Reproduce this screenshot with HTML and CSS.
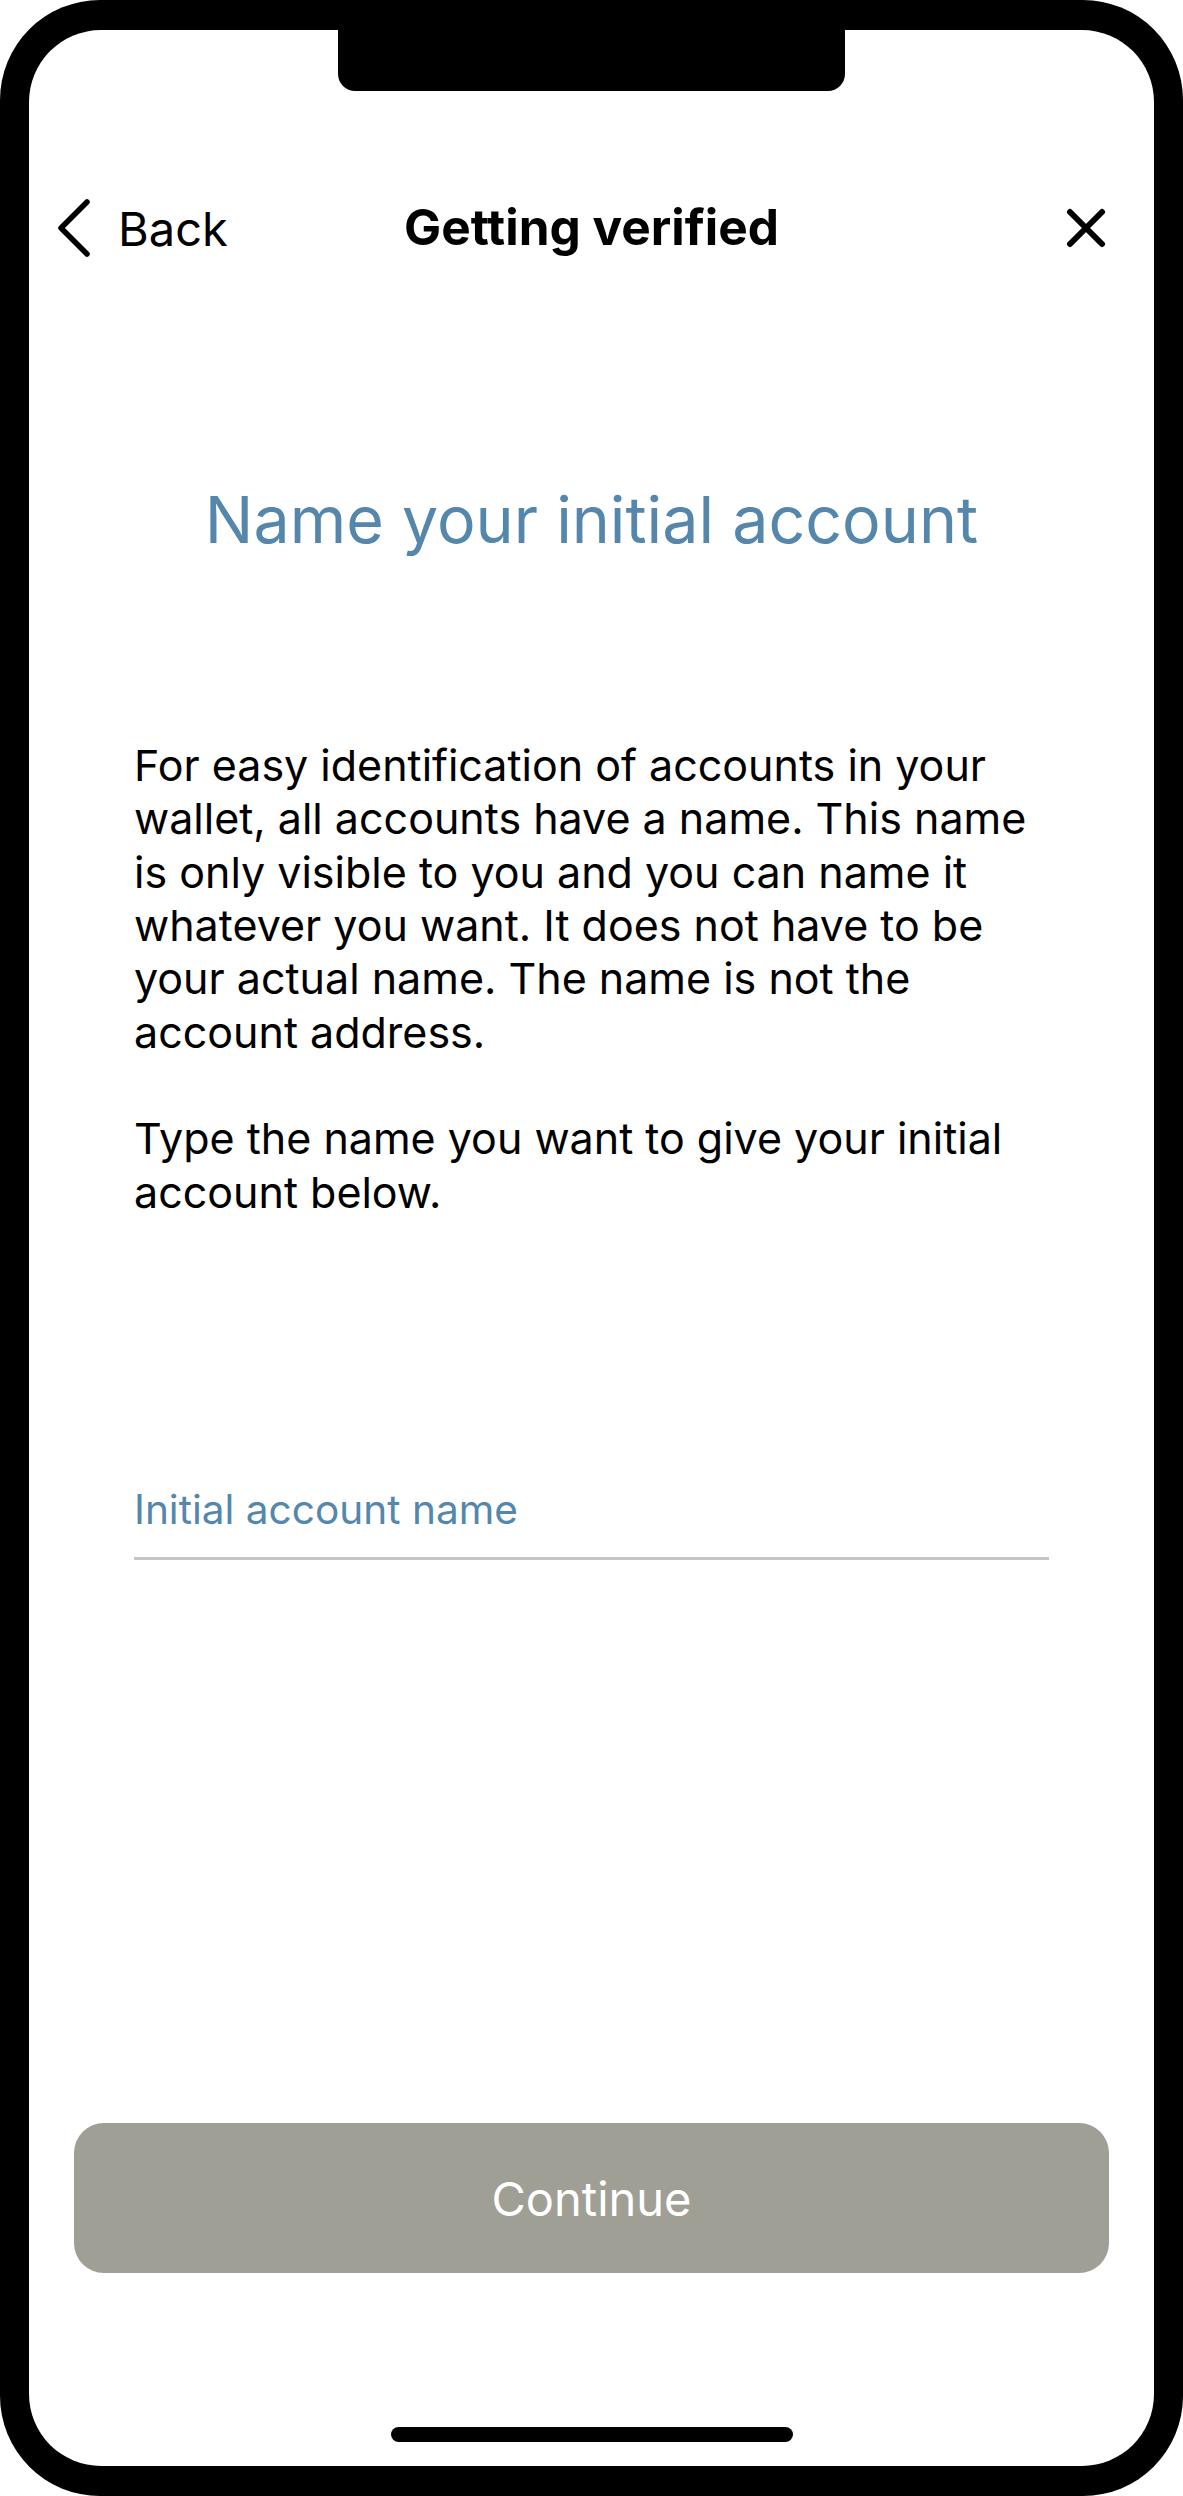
FILE: index.html
```html
<!DOCTYPE html>
<html lang="en">
<head>
<meta charset="utf-8">
<title>Getting verified</title>
<link rel="stylesheet" href="styles.css">
</head>
<body>
<div class="phone">
  <div class="notch"></div>
  <div class="screen">
    <header class="nav">
      <div class="nav-back">
        <svg class="chevron" viewBox="0 0 36 60" width="36" height="60" aria-hidden="true">
          <path d="M31 4 L5 30 L31 56" fill="none" stroke="#000" stroke-width="5.5" stroke-linecap="round" stroke-linejoin="round"/>
        </svg>
        <span class="back-label">Back</span>
      </div>
      <h1 class="nav-title">Getting verified</h1>
      <svg class="close" viewBox="0 0 40 40" width="40" height="40" aria-hidden="true">
        <path d="M4 4 L36 36 M36 4 L4 36" fill="none" stroke="#000" stroke-width="6" stroke-linecap="round"/>
      </svg>
    </header>
    <main class="content">
      <h2 class="title">Name your initial account</h2>
      <div class="body-text">
        <p>For easy identification of accounts in your wallet, all accounts have a name. This name is only visible to you and you can name it whatever you want. It does not have to be your actual name. The name is not the account address.</p>
        <p>Type the name you want to give your initial account below.</p>
      </div>
      <div class="field">
        <span class="field-label">Initial account name</span>
      </div>
    </main>
    <div class="footer">
      <button class="continue" type="button">Continue</button>
      <div class="home-indicator"></div>
    </div>
  </div>
</div>
</body>
</html>
```
FILE: styles.css
```css
html, body {
  margin: 0;
  padding: 0;
  background: #fff;
}
body {
  font-family: Inter, "Noto Sans", "Liberation Sans", sans-serif;
  color: #000;
}
.phone {
  position: relative;
  width: 1183px;
  height: 2496px;
  box-sizing: border-box;
  padding: 30px 29px;
  background: #000;
  border-radius: 100px;
}
.notch {
  position: absolute;
  left: 338px;
  top: 0;
  width: 507px;
  height: 91px;
  background: #000;
  border-radius: 0 0 17px 17px;
  z-index: 2;
}
.screen {
  height: 100%;
  background: #fff;
  border-radius: 72px;
  display: flex;
  flex-direction: column;
  overflow: hidden;
}
.nav {
  display: grid;
  grid-template-columns: 1fr auto 1fr;
  align-items: center;
  height: 110px;
  margin-top: 143px;
  padding: 0 27px;
}
.nav-back {
  display: flex;
  align-items: center;
  gap: 26px;
}
.chevron { display: block; }
.back-label {
  font-size: 47px;
  font-weight: 400;
  line-height: 1;
}
.nav-title {
  margin: 0;
  font-size: 49.5px;
  font-weight: 700;
  line-height: 1;
}
.close {
  display: block;
  justify-self: end;
  margin-right: 21px;
}
.content {
  padding: 0 105px;
}
.title {
  margin: 193.6px 0 0;
  text-align: center;
  font-size: 64.5px;
  font-weight: 400;
  line-height: 86px;
  color: #5586ab;
}
.body-text {
  margin-top: 176.6px;
  font-size: 43px;
  line-height: 53.3px;
}
.body-text p { margin: 0 0 53.3px; }
.body-text p:last-child { margin-bottom: 0; }
.field {
  margin-top: 264px;
  padding-bottom: 21px;
  border-bottom: 3px solid #c6c6c6;
}
.field-label {
  display: block;
  font-size: 40.6px;
  line-height: 53px;
  color: #5586ab;
}
.footer {
  margin-top: auto;
  display: flex;
  flex-direction: column;
  align-items: center;
}
.continue {
  align-self: stretch;
  margin: 0 45px;
  height: 150px;
  border: 0;
  border-radius: 30px;
  background: #9f9f96;
  color: #fff;
  font-family: inherit;
  font-size: 47px;
  font-weight: 400;
}
.home-indicator {
  width: 402px;
  height: 15px;
  margin: 154px 0 24px;
  background: #000;
  border-radius: 8px;
}
```
